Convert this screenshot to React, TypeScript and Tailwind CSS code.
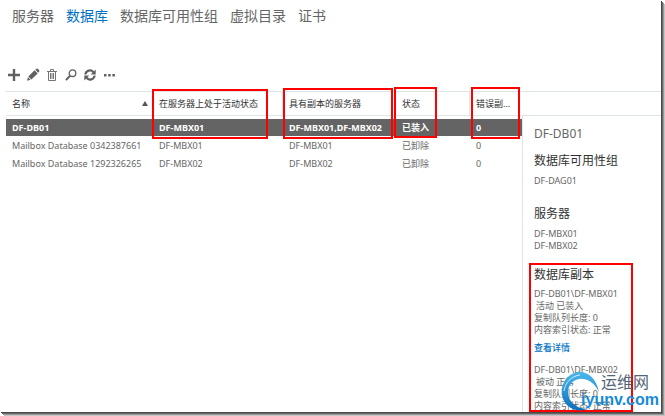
import { clsx } from 'clsx';

const tabs = ['服务器', '数据库', '数据库可用性组', '虚拟目录', '证书'];

const databases = [
  { name: 'DF-DB01', active: 'DF-MBX01', copies: 'DF-MBX01,DF-MBX02', status: '已装入', bad: 0 },
  { name: 'Mailbox Database 0342387661', active: 'DF-MBX01', copies: 'DF-MBX01', status: '已卸除', bad: 0 },
  { name: 'Mailbox Database 1292326265', active: 'DF-MBX02', copies: 'DF-MBX02', status: '已卸除', bad: 0 },
];

const copies = [
  { name: 'DF-DB01\\DF-MBX01', state: '活动 已装入', queue: 0, index: '正常', details: true },
  { name: 'DF-DB01\\DF-MBX02', state: '被动 正常', queue: 0, index: '正常', details: false },
];

function Toolbar() {
  return (
    <div className="flex items-center gap-[5px] pl-[7px] mt-[42px] text-[#606060]">
      <button type="button" aria-label="新建" className="size-[14px]">
        <svg viewBox="0 0 14 14" fill="none" stroke="currentColor" strokeWidth="2.4">
          <path d="M7 1v12M1 7h12" />
        </svg>
      </button>
      <button type="button" aria-label="编辑" className="size-[14px]">
        <svg viewBox="0 0 14 14" fill="currentColor">
          <path d="M2.300 8.400 8.600 2.300 11.700 5.400 5.400 11.500z" />
          <path d="M9.300 1.700 10.600.700Q11.200.300 11.800.800L13.200 2.200Q13.700 2.900 13.200 3.500L12.300 4.700z" />
          <path d="M1.900 9.200 4.600 11.800 1 12.800z" />
        </svg>
      </button>
      <button type="button" aria-label="删除" className="size-[14px] text-[#747474]">
        <svg viewBox="0 0 14 14" fill="none" stroke="currentColor">
          <path d="M2 3.500h10M5.500 3V1.500h3V3M3.500 4v8.500h7V4M5.500 5v6M7 5v6M8.500 5v6" />
        </svg>
      </button>
      <button type="button" aria-label="搜索" className="size-[14px]">
        <svg viewBox="0 0 14 14" fill="none" stroke="currentColor">
          <circle cx="8.500" cy="5.200" r="3.300" strokeWidth="1.300" />
          <path d="M6.200 7.600 2 12" strokeWidth="2" />
        </svg>
      </button>
      <button type="button" aria-label="刷新" className="size-[14px]">
        <svg viewBox="0 0 14 14" fill="none" stroke="currentColor" strokeWidth="2.2">
          <path d="M2.400 6.500A4.500 4.500 0 0 1 10.500 4.300M11.600 7.500A4.500 4.500 0 0 1 3.500 9.700" />
          <path d="M12.700 1.500v5H7.700zM1.300 12.500v-5h5z" fill="currentColor" stroke="none" />
        </svg>
      </button>
      <button type="button" aria-label="更多" className="size-[14px]">
        <svg viewBox="0 0 14 14" fill="currentColor">
          <path d="M2 6h2.500v2.500H2zM6.200 6h2.500v2.500h-2.500zM10.400 6h2.500v2.500h-2.500z" />
        </svg>
      </button>
    </div>
  );
}

function DatabaseTable() {
  return (
    <table className="w-full table-fixed border-separate border-spacing-0 text-left text-[9px] leading-3 text-[#666]">
      <colgroup>
        <col className="w-[147px]" />
        <col className="w-[130px]" />
        <col className="w-[113px]" />
        <col className="w-[74px]" />
        <col />
        <col className="w-[139px]" />
      </colgroup>
      <thead className="text-[#333]">
        <tr className="h-[25px] *:border-y *:border-r *:border-[#dde5e8] *:p-0 *:pl-[6px] *:font-normal *:whitespace-nowrap">
          <th className="border-r-transparent!">
            <span className="flex items-center justify-between pr-1">
              名称
              <svg viewBox="0 0 6 5" className="w-[6px] h-[5px]" fill="#555">
                <path d="M3 0 6 5H0z" />
              </svg>
            </span>
          </th>
          <th>在服务器上处于活动状态</th>
          <th>具有副本的服务器</th>
          <th>状态</th>
          <th className="border-r-transparent!">错误副...</th>
          <th className="border-r-transparent!" aria-label="详细信息" />
        </tr>
      </thead>
      <tbody>
        <tr aria-hidden="true" className="h-[3px]">
          <td className="p-0" />
        </tr>
        {databases.map((db, i) => (
          <tr
            key={db.name}
            className={clsx(
              'h-[18px] *:border-b *:border-white *:p-0 *:pl-[6px] *:whitespace-nowrap',
              i === 0 && 'font-bold text-white *:bg-[#646464]',
            )}
          >
            <td>{db.name}</td>
            <td>{db.active}</td>
            <td>{db.copies}</td>
            <td>{db.status}</td>
            <td>{db.bad}</td>
          </tr>
        ))}
      </tbody>
    </table>
  );
}

function DetailPane() {
  return (
    <aside className="absolute right-0 top-[116px] bottom-0 w-[139px] overflow-hidden border-l border-[#dde5e8] bg-white pl-[11px] text-[9px] leading-3 text-[#666]">
      <h2 className="mt-[10px] text-xs leading-4">DF-DB01</h2>
      <h3 className="mt-[11px] text-xs leading-4 text-[#333]">数据库可用性组</h3>
      <p className="mt-[6px]">DF-DAG01</p>
      <h3 className="mt-[19px] text-xs leading-4 text-[#333]">服务器</h3>
      <p className="mt-[6px]">DF-MBX01</p>
      <p>DF-MBX02</p>
      <h3 className="mt-[15px] text-xs leading-4 text-[#333]">数据库副本</h3>
      {copies.map((copy) => (
        <div key={copy.name} className="mt-[5px] mb-[10px]">
          <p>{copy.name}</p>
          <p className="pl-[2px]">{copy.state}</p>
          <p>复制队列长度: {copy.queue}</p>
          <p>内容索引状态: {copy.index}</p>
          {copy.details && (
            <a href="#details" className="mt-[6px] block font-medium text-[#0072c6]">
              查看详情
            </a>
          )}
        </div>
      ))}
    </aside>
  );
}

function Watermark() {
  return (
    <div className="absolute right-[2px] bottom-0 flex items-end">
      <svg viewBox="0 0 40 42" className="w-10 h-[42px] -mr-5" fill="none">
        <defs>
          <linearGradient id="swirl" x1="0" y1="0" x2="0" y2="1">
            <stop offset="0" stopColor="#4bb8ec" />
            <stop offset="1" stopColor="#0b6fc0" />
          </linearGradient>
        </defs>
        <path
          d="M38 22C35 6 23-2 11 4C-2 11-3 31 10 38C15 41 21 41 25 39C14 38 7 31 7 22C8 6 29 3 38 22Z"
          fill="url(#swirl)"
        />
        <path d="M3 21C4 13 10 6 19 5" stroke="#c9ebfa" />
      </svg>
      <div className="relative pb-1">
        <p className="pl-5 text-base leading-5 text-[#536477]">运维网</p>
        <p className="font-['Liberation_Sans',sans-serif] text-base leading-4 font-bold text-[#168bd6]">
          iyunv.com
        </p>
      </div>
    </div>
  );
}

export default function App() {
  return (
    <div className="h-screen bg-white pr-1 pb-1 font-['Noto_Sans','Noto_Sans_CJK_SC',sans-serif]">
      <main className="relative h-full overflow-hidden bg-white shadow-[1px_1px_0_#4a4a4a,2px_2px_0_#666,3px_3px_0_#999,4px_4px_0_#c4c4c4]">
        <nav className="flex gap-3 pt-[6px] pl-3 text-sm leading-5">
          {tabs.map((tab) => (
            <a key={tab} href="#tab" className={tab === '数据库' ? 'text-[#0072c6]' : 'text-[#666]'}>
              {tab}
            </a>
          ))}
        </nav>
        <Toolbar />
        <div className="mt-[9px] pl-[6px]">
          <DatabaseTable />
        </div>
        <DetailPane />

        {/* Call-out frames */}
        <span className="absolute left-[152px] top-[89px] h-[50px] w-[116px] border-2 border-[#f00]" />
        <span className="absolute left-[283px] top-[88px] h-[51px] w-[110px] border-2 border-[#f00]" />
        <span className="absolute left-[394px] top-[87px] h-[51px] w-[43px] border-2 border-[#f00]" />
        <span className="absolute left-[471px] top-[87px] h-[52px] w-[49px] border-2 border-[#f00]" />
        <span className="absolute right-[28px] top-[263px] bottom-0 w-[104px] border-2 border-[#f00]" />
        <Watermark />
      </main>
    </div>
  );
}
